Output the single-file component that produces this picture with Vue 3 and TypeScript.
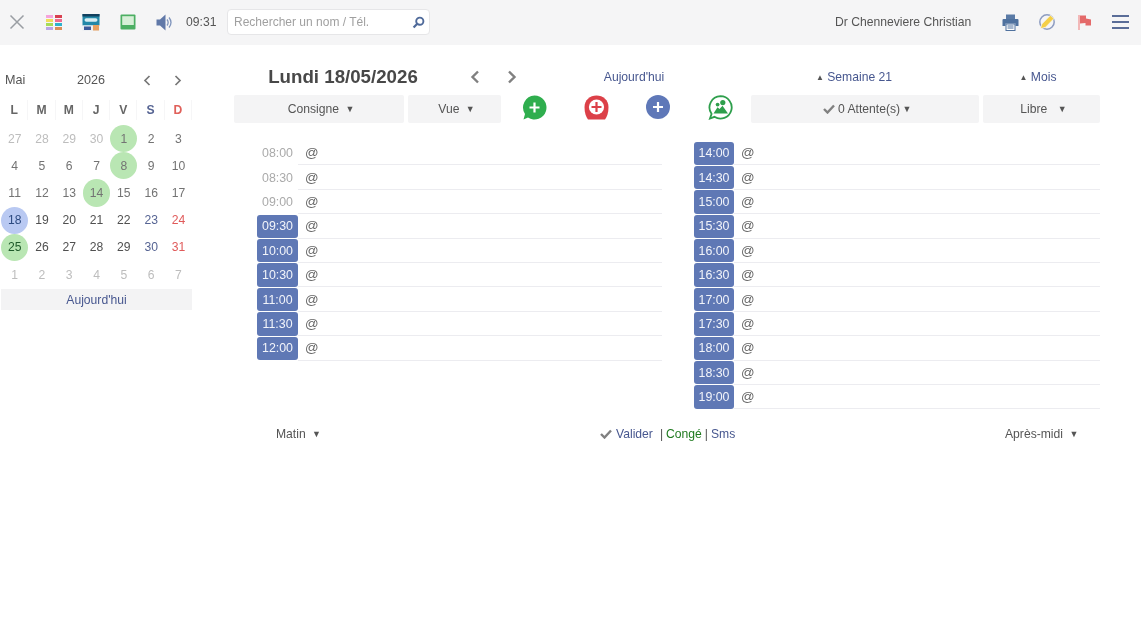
<script setup lang="ts">
type Day = { n: number; cls: string }
const heads = [
  { t: 'L', c: '' }, { t: 'M', c: '' }, { t: 'M', c: '' }, { t: 'J', c: '' },
  { t: 'V', c: '' }, { t: 'S', c: 'sat' }, { t: 'D', c: 'sun' },
]
const weeks: Day[][] = [
  [27, 28, 29, 30].map(n => ({ n, cls: 'out' })).concat([
    { n: 1, cls: 'soft hol' }, { n: 2, cls: 'soft' }, { n: 3, cls: 'soft' }]),
  [4, 5, 6, 7].map(n => ({ n, cls: 'soft' })).concat([
    { n: 8, cls: 'soft hol' }, { n: 9, cls: 'soft' }, { n: 10, cls: 'soft' }]),
  [
    { n: 11, cls: 'soft' }, { n: 12, cls: 'soft' }, { n: 13, cls: 'soft' },
    { n: 14, cls: 'soft hol' }, { n: 15, cls: 'soft' }, { n: 16, cls: 'soft' }, { n: 17, cls: 'soft' },
  ],
  [
    { n: 18, cls: 'today' }, { n: 19, cls: '' }, { n: 20, cls: '' }, { n: 21, cls: '' },
    { n: 22, cls: '' }, { n: 23, cls: 'sat' }, { n: 24, cls: 'sun' },
  ],
  [
    { n: 25, cls: 'hol dark' }, { n: 26, cls: '' }, { n: 27, cls: '' }, { n: 28, cls: '' },
    { n: 29, cls: '' }, { n: 30, cls: 'sat' }, { n: 31, cls: 'sun' },
  ],
  [1, 2, 3, 4, 5, 6, 7].map(n => ({ n, cls: 'out' })),
]
const morning = [
  { t: '08:00', on: false }, { t: '08:30', on: false }, { t: '09:00', on: false },
  { t: '09:30', on: true }, { t: '10:00', on: true }, { t: '10:30', on: true },
  { t: '11:00', on: true }, { t: '11:30', on: true }, { t: '12:00', on: true },
]
const afternoon = ['14:00', '14:30', '15:00', '15:30', '16:00', '16:30', '17:00', '17:30', '18:00', '18:30', '19:00']
  .map(t => ({ t, on: true }))
const palette = ['#f5a4dc', '#d8404f', '#f2dc5a', '#ee6c92', '#a6dc58', '#2fb2cc', '#b9a6e6', '#da8e58']
</script>

<template>
  <div class="page">
    <header class="topbar">
      <svg class="ic close" width="16" height="16" viewBox="0 0 16 16"><path d="M1.5 1.5 14.5 14.5M14.5 1.5 1.5 14.5" stroke="#9a9ea3" stroke-width="1.5" fill="none" /></svg>
      <div class="swatches">
        <i v-for="(c, i) in palette" :key="i" :style="{ background: c }"></i>
      </div>
      <svg class="ic card" width="18" height="17" viewBox="0 0 18 17">
        <rect x="0.5" y="0" width="17" height="11.5" fill="#2388a8" />
        <rect x="0.5" y="0" width="17" height="2.5" fill="#12405e" />
        <rect x="2.5" y="4.2" width="13" height="3.6" rx="1.8" fill="#d8edf2" />
        <rect x="0.5" y="11.5" width="17" height="5.5" fill="#eef0f3" />
        <rect x="2" y="12.5" width="7" height="3.5" fill="#3c5a9a" />
        <rect x="11" y="11" width="6" height="5.5" fill="#e8a060" />
      </svg>
      <svg class="ic screen" width="16" height="16" viewBox="0 0 16 16">
        <rect x="0.5" y="0.5" width="15" height="15" rx="1" fill="#4caf63" />
        <rect x="2.2" y="2.2" width="11.6" height="8.8" fill="#d7efd8" />
      </svg>
      <svg class="ic sound" width="17" height="17" viewBox="0 0 17 17">
        <path d="M0.5 5.5H4L9.5 0.5V16.5L4 11.5H0.5Z" fill="#6078a8" />
        <path d="M11 5.5C12.4 7.3 12.4 9.7 11 11.5M13 3.5C15.4 6.5 15.4 10.5 13 13.5" stroke="#7f94bc" stroke-width="1.3" fill="none" />
      </svg>
      <span class="clock">09:31</span>
      <label class="search">
        <span class="ph">Rechercher un nom / Tél.</span>
        <svg width="13" height="13" viewBox="0 0 13 13"><circle cx="7.8" cy="5.2" r="3.6" stroke="#4f6a9a" stroke-width="1.9" fill="none" /><path d="M5 8 1.6 11.6" stroke="#4f6a9a" stroke-width="2.2" /></svg>
      </label>
      <span class="doctor">Dr Chenneviere Christian</span>
      <svg class="ic print" width="17" height="17" viewBox="0 0 17 17">
        <path d="M4 0.5H13V5H4Z" fill="#5a7aa6" />
        <path d="M1.5 5H15.5A1 1 0 0 1 16.5 6V12H13.5V9.5H3.5V12H0.5V6A1 1 0 0 1 1.5 5Z" fill="#4f719e" />
        <rect x="4" y="10" width="9" height="6.5" fill="#fff" stroke="#4f719e" />
        <path d="M5.5 12H11.5M5.5 14H11.5" stroke="#4f719e" />
      </svg>
      <svg class="ic pencil" width="18" height="18" viewBox="0 0 18 18">
        <circle cx="9" cy="9" r="7.2" stroke="#8d9cc0" stroke-width="1.5" fill="none" />
        <path d="M2.4 15.8 3.8 11 12.4 2.2 16 5.6 7.4 14.4Z" fill="#f4cf48" stroke="#f5f5f6" stroke-width="0.8" />
      </svg>
      <svg class="ic flag" width="15" height="16" viewBox="0 0 15 16">
        <rect x="1" y="1" width="2" height="15" fill="#f2b8b8" />
        <path d="M3 1.5H9V4.5L14 5.5V11.5H8.5V9L3 9.5Z" fill="#e46a6a" />
      </svg>
      <div class="burger"><i></i><i></i><i></i></div>
    </header>

    <main class="content">
      <aside class="side">
        <div class="cal-head">
          <span class="cal-month">Mai</span>
          <span class="cal-year">2026</span>
          <svg class="chev c1" width="8" height="11" viewBox="0 0 8 11"><path d="M6.5 1 2 5.5 6.5 10" stroke="#777" stroke-width="1.7" fill="none" /></svg>
          <svg class="chev c2" width="8" height="11" viewBox="0 0 8 11"><path d="M1.5 1 6 5.5 1.5 10" stroke="#777" stroke-width="1.7" fill="none" /></svg>
        </div>
        <div class="cal-grid heads">
          <span v-for="(h, i) in heads" :key="i" class="cell head" :class="h.c">{{ h.t }}</span>
        </div>
        <div v-for="(w, i) in weeks" :key="i" class="cal-grid">
          <span v-for="d in w" :key="d.n" class="cell" :class="d.cls">{{ d.n }}</span>
        </div>
        <div class="cal-today">Aujourd'hui</div>
      </aside>

      <section class="day">
        <div class="title-row">
          <h1 class="title">Lundi 18/05/2026</h1>
          <svg class="nav nav1" width="10" height="14" viewBox="0 0 10 14"><path d="M8 1.5 2.5 7 8 12.5" stroke="#808080" stroke-width="2.4" fill="none" /></svg>
          <svg class="nav nav2" width="10" height="14" viewBox="0 0 10 14"><path d="M2 1.5 7.5 7 2 12.5" stroke="#808080" stroke-width="2.4" fill="none" /></svg>
          <a class="lk today-lk">Aujourd'hui</a>
          <a class="lk week-lk"><span class="up">▲</span> Semaine 21</a>
          <a class="lk month-lk"><span class="up">▲</span> Mois</a>
        </div>

        <div class="toolbar">
          <button class="tb w-consigne">Consigne <span class="dn">▼</span></button>
          <button class="tb w-vue">Vue <span class="dn">▼</span></button>
          <div class="act">
            <svg width="25" height="25" viewBox="0 0 25 25"><path d="M12.5 0.5A12 12 0 1 1 6 22.6L1.5 24.5 3 19A12 12 0 0 1 12.5 0.5Z" fill="#2fae4e" /><path d="M12.5 7.5V17.5M7.5 12.5H17.5" stroke="#fff" stroke-width="2.2" /></svg>
          </div>
          <div class="act">
            <svg width="25" height="25" viewBox="0 0 25 25"><path d="M12.5 0.5C19 0.5 24.5 5 24.5 12 24.5 18 23 22 21 24.5H4C2 22 0.5 18 0.5 12 0.5 5 6 0.5 12.5 0.5Z" fill="#dc4048" /><circle cx="12.5" cy="12" r="7.6" fill="#fff" /><path d="M12.5 7V17M7.5 12H17.5" stroke="#dc4048" stroke-width="2.2" /></svg>
          </div>
          <div class="act">
            <svg width="24" height="24" viewBox="0 0 24 24"><circle cx="12" cy="12" r="12" fill="#5f78b8" /><path d="M12 7V17M7 12H17" stroke="#fff" stroke-width="2.2" /></svg>
          </div>
          <div class="act">
            <svg width="25" height="25" viewBox="0 0 25 25"><path d="M12.5 1.2A11.2 11.2 0 1 1 6.4 21.8L2 23.5 3.6 18.9A11.2 11.2 0 0 1 12.5 1.2Z" fill="#fff" stroke="#2e9f4c" stroke-width="1.8" /><circle cx="14.8" cy="7.6" r="2.6" fill="#2e9f4c" /><circle cx="9.6" cy="9.6" r="1.9" fill="#2e9f4c" /><path d="M5.5 18.5 9.5 12.2 11.5 14 14.5 10.8 20 18.5Z" fill="#2e9f4c" /></svg>
          </div>
          <button class="tb w-wait">
            <svg class="chk" width="12" height="10" viewBox="0 0 12 10"><path d="M1 5 4.5 8.5 11 1.5" stroke="#808080" stroke-width="2.4" fill="none" /></svg>
            0 Attente(s) <span class="dn tight">▼</span>
          </button>
          <button class="tb w-libre">Libre <span class="dn wide">▼</span></button>
        </div>

        <div class="slots">
          <div class="col">
            <div v-for="s in morning" :key="s.t" class="slot">
              <span class="hour" :class="{ on: s.on }">{{ s.t }}</span>
              <span class="at">@</span>
            </div>
          </div>
          <div class="col pm">
            <div v-for="s in afternoon" :key="s.t" class="slot">
              <span class="hour" :class="{ on: s.on }">{{ s.t }}</span>
              <span class="at">@</span>
            </div>
          </div>
        </div>

        <div class="foot">
          <span class="f-am">Matin <span class="dn">▼</span></span>
          <span class="f-mid">
            <svg class="chk" width="12" height="10" viewBox="0 0 12 10"><path d="M1 5 4.5 8.5 11 1.5" stroke="#808080" stroke-width="2.4" fill="none" /></svg>
            <a class="lk m4">Valider</a>
            <span class="m7">|</span>
            <a class="conge m3">Congé</a>
            <span class="m3">|</span>
            <a class="lk m3">Sms</a>
          </span>
          <span class="f-pm">Après-midi <span class="dn">▼</span></span>
        </div>
      </section>
    </main>
  </div>
</template>

<style>
html, body { margin: 0; background: #fff; }
</style>

<style scoped>
.page {
  width: 1141px;
  height: 638px;
  overflow: hidden;
  font-family: "Liberation Sans", Arial, sans-serif;
  font-size: 12.15px;
  color: #555;
  will-change: transform;
}
.topbar {
  height: 45px;
  box-sizing: border-box;
  padding-bottom: 1px;
  background: #f5f5f6;
  display: flex;
  align-items: center;
}
.ic { flex: none; }
.close { margin-left: 9px; }
.swatches {
  margin-left: 21px;
  width: 16px;
  display: grid;
  grid-template-columns: 7px 7px;
  grid-auto-rows: 3px;
  column-gap: 2px;
  row-gap: 1px;
  flex: none;
}
.swatches i { display: block; }
.card { margin-left: 20px; }
.screen { margin-left: 20px; }
.sound { margin-left: 20px; }
.clock { margin-left: 13px; width: 31px; color: #555; }
.search {
  margin-left: 10px;
  width: 203px;
  height: 26px;
  box-sizing: border-box;
  background: #fff;
  border: 1px solid #e6e6e8;
  border-radius: 4px;
  display: flex;
  align-items: center;
  justify-content: space-between;
  padding: 0 4px 0 6px;
  flex: none;
}
.ph { color: #a0a0a0; font-size: 12px; }
.doctor { margin-left: 405px; width: 137px; color: #555; flex: none; }
.print { margin-left: 30px; }
.pencil { margin-left: 19px; }
.flag { margin-left: 21px; }
.burger {
  margin-left: 20px;
  width: 17px;
  display: flex;
  flex-direction: column;
  gap: 4px;
  flex: none;
}
.burger i { display: block; height: 2px; background: #5a6d98; }

.content { display: flex; align-items: flex-start; }
.side { width: 191px; margin-left: 1px; flex: none; padding-top: 25px; }
.cal-head {
  display: flex;
  align-items: center;
  height: 20px;
  margin-bottom: 10px;
  color: #555;
}
.cal-month { margin-left: 4px; width: 72px; font-size: 12.6px; }
.cal-year { width: 66px; font-size: 12.6px; }
.chev { flex: none; }
.c2 { margin-left: 23px; }
.cal-grid {
  display: grid;
  grid-template-columns: repeat(7, 27.3px);
}
.heads { margin-bottom: 5px; }
.heads .cell { height: 20px; border-right: 1px solid #f6f6f7; box-sizing: border-box; }
.cell {
  height: 27.2px;
  display: flex;
  align-items: center;
  justify-content: center;
  color: #505050;
  border-radius: 50%;
}
.head { font-weight: 700; color: #666; border-radius: 0; }
.head.sat { color: #566493; }
.head.sun { color: #e0605a; }
.out { color: #bdbdbd; }
.soft { color: #737373; }
.sat { color: #566493; }
.sun { color: #e05a5a; }
.hol { background: #b9e6b3; }
.dark { color: #1f5a2a; }
.today { background: #b9c9f2; color: #2c4a80; }
.cal-today {
  height: 21px;
  margin-top: 1px;
  background: #f3f3f4;
  color: #47578f;
  display: flex;
  align-items: center;
  justify-content: center;
}

.day { margin-left: 42px; width: 866px; flex: none; padding-top: 20px; }
.title-row { display: flex; align-items: center; height: 24px; margin-bottom: 6px; }
.title {
  margin: 0;
  width: 218px;
  flex: none;
  text-align: center;
  font-size: 18.7px;
  font-weight: 700;
  color: #484848;
}
.nav { flex: none; }
.nav1 { margin-left: 18px; }
.nav2 { margin-left: 27px; }
.lk { color: #47578f; }
.today-lk { width: 100px; flex: none; margin-left: 67px; text-align: center; }
.week-lk { width: 174px; flex: none; margin-left: 83px; text-align: center; }
.month-lk { width: 110px; flex: none; margin-left: 42px; text-align: center; }
.up { font-size: 8px; color: #555; vertical-align: 1px; }

.toolbar { display: flex; align-items: flex-start; height: 28px; }
.tb {
  height: 28px;
  padding: 0 0 0 4px;
  border: 0;
  background: #f4f4f5;
  border-radius: 2px;
  font: inherit;
  color: #555;
  flex: none;
}
.dn { font-size: 9px; color: #555; margin-left: 3px; vertical-align: 1px; }
.dn.tight { margin-left: -1px; }
.dn.wide { margin-left: 7px; }
.w-consigne { width: 170px; }
.w-vue { width: 93px; margin-left: 4px; }
.act { width: 62px; flex: none; display: flex; justify-content: center; align-items: flex-start; }
.act:first-of-type { margin-left: 2px; }
.w-wait { width: 228px; }
.w-libre { width: 117px; margin-left: 4px; }
.chk { vertical-align: -1px; flex: none; }

.slots {
  display: grid;
  grid-template-columns: 405px 406px;
  column-gap: 32px;
  margin-left: 23px;
  margin-top: 18px;
  align-items: start;
}
.slot {
  display: flex;
  align-items: center;
  height: 24.4px;
}
.hour {
  width: 41px;
  height: 23.4px;
  flex: none;
  display: flex;
  align-items: center;
  justify-content: center;
  color: #aaa;
  border-radius: 3px;
  font-size: 12.4px;
}
.pm .hour { width: 40px; }
.hour.on { background: #5f78b5; color: #f2f4fa; }
.at {
  flex: 1;
  height: 23.4px;
  display: flex;
  align-items: center;
  padding-left: 7px;
  border-bottom: 1px solid #ececf0;
  color: #666;
  font-size: 13.4px;
}

.foot { display: flex; align-items: center; height: 18px; margin-top: 16px; color: #555; }
.f-am { margin-left: 42px; width: 324px; flex: none; }
.f-mid { width: 405px; flex: none; display: flex; align-items: center; color: #555; }
.m4 { margin-left: 4px; }
.m7 { margin-left: 7px; }
.m3 { margin-left: 3px; }
.conge { color: #1f7a1f; }
.f-pm { flex: none; }
</style>
